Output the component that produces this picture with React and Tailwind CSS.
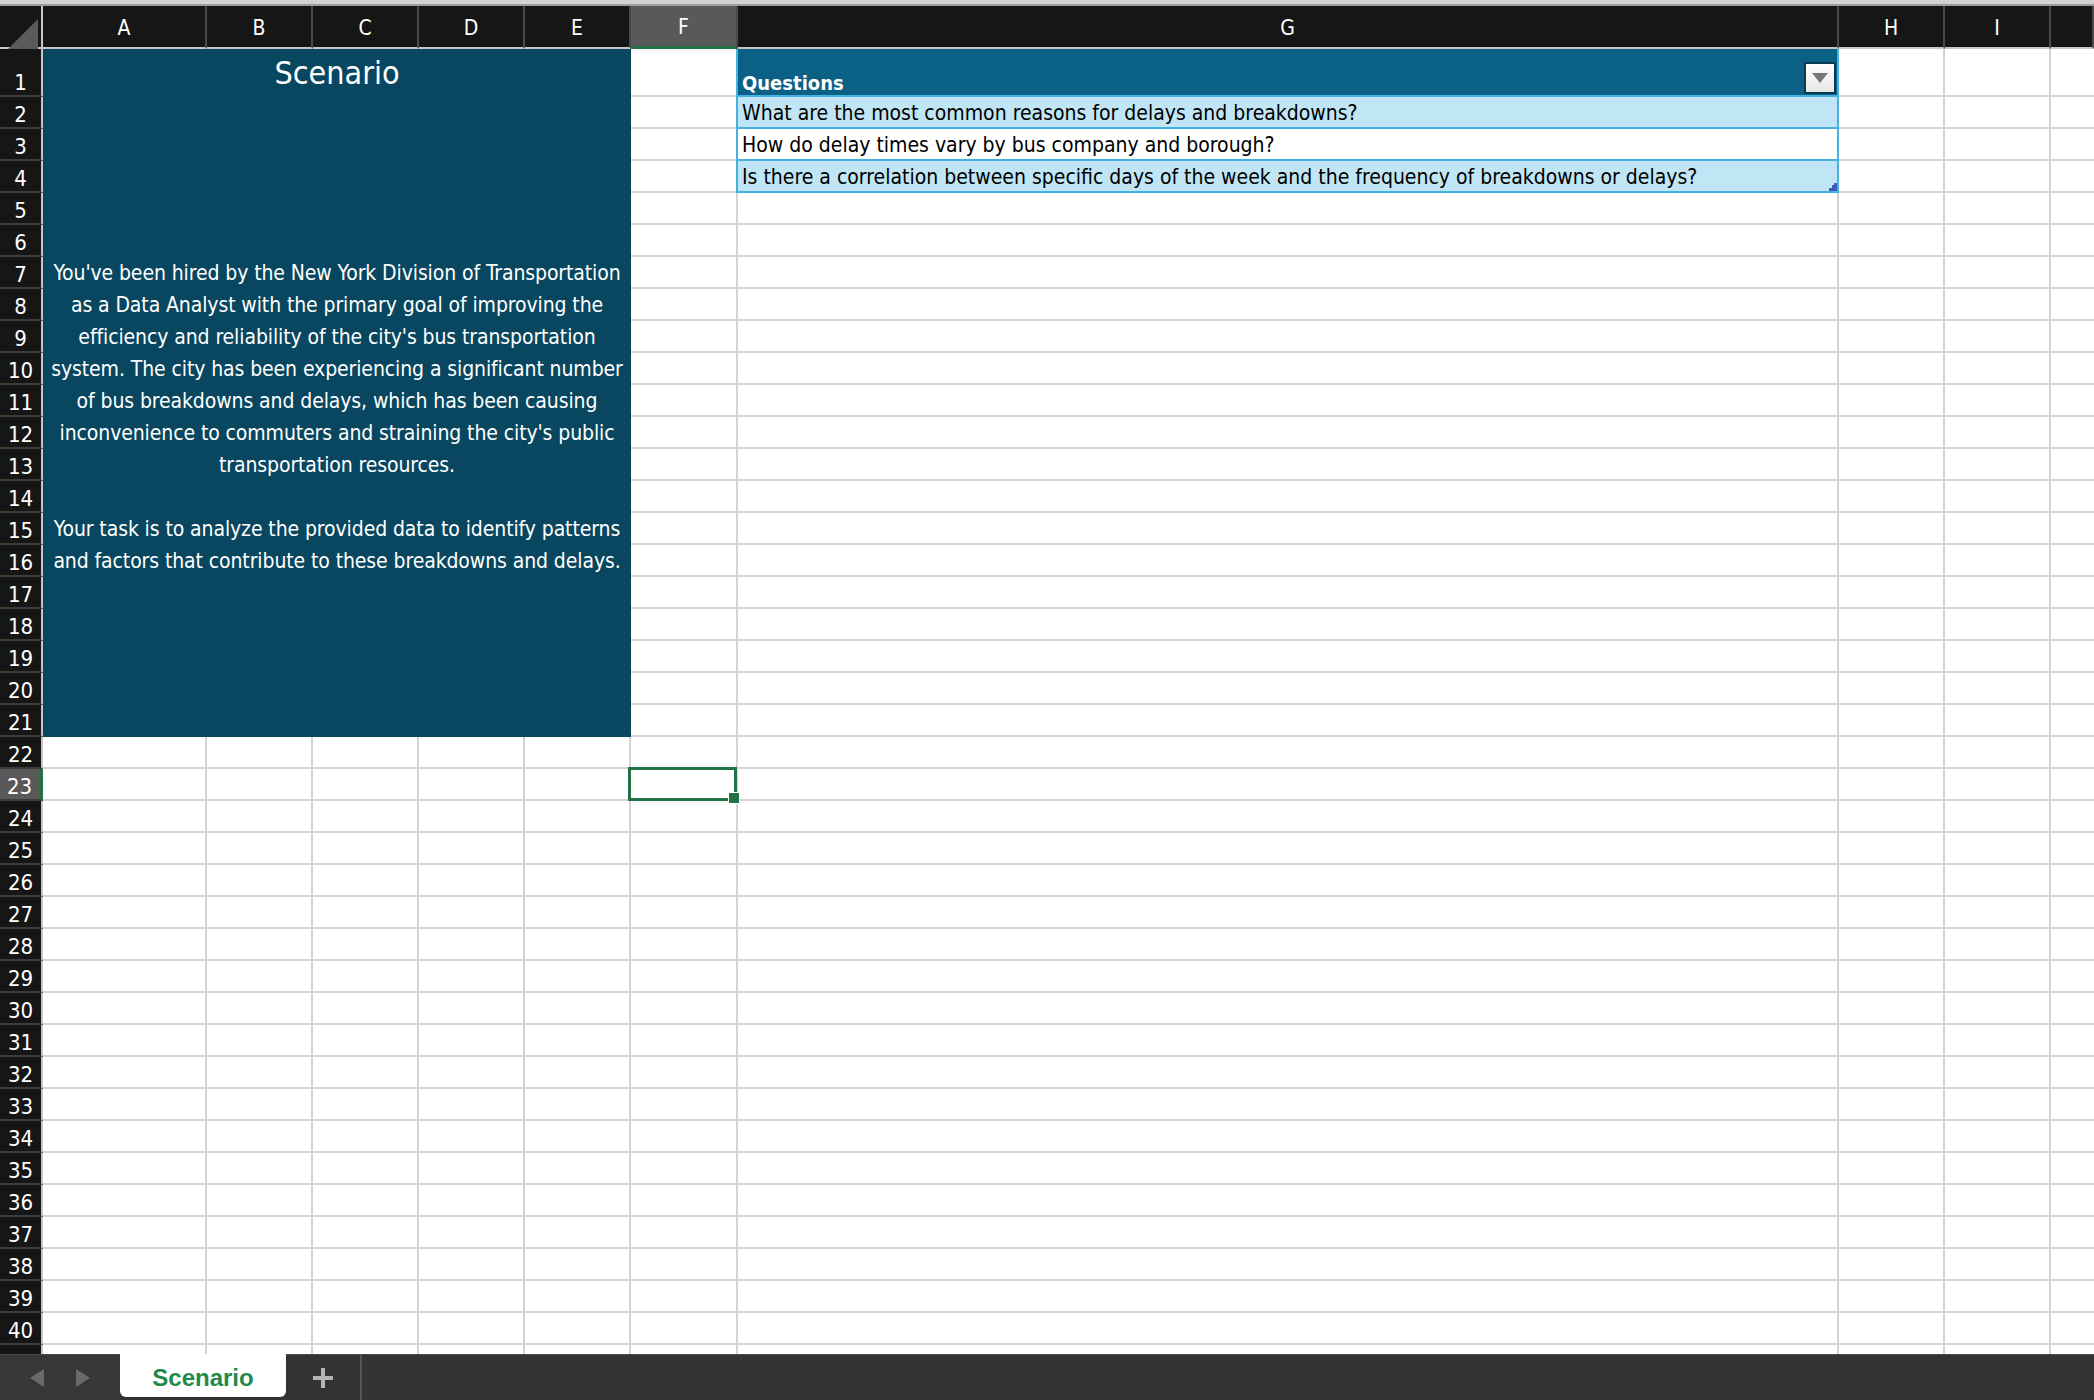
import React from 'react';

const narrow = "font-['Liberation_Sans_Narrow','DejaVu_Sans_Condensed',sans-serif]";

const columns = ['A', 'B', 'C', 'D', 'E', 'F', 'G', 'H', 'I', ''];

const scenarioLines = [
  "You've been hired by the New York Division of Transportation",
  'as a Data Analyst with the primary goal of improving the',
  "efficiency and reliability of the city's bus transportation",
  'system. The city has been experiencing a significant number',
  'of bus breakdowns and delays, which has been causing',
  "inconvenience to commuters and straining the city's public",
  'transportation resources.',
  '',
  'Your task is to analyze the provided data to identify patterns',
  'and factors that contribute to these breakdowns and delays.',
];

const questions = [
  'What are the most common reasons for delays and breakdowns?',
  'How do delay times vary by bus company and borough?',
  'Is there a correlation between specific days of the week and the frequency of breakdowns or delays?',
];

const SELECTED_ROW = 23;
const SELECTED_COL = 5;
const LAST_ROW = 41;

const ColumnHeader = ({ label, index }) => {
  const selected = index === SELECTED_COL;
  return (
    <div
      className={
        selected
          ? 'flex items-center justify-center pt-[4px] bg-[#595959] border-b-[3px] border-b-[#217346] border-r-2 border-r-[#4a4a4a] text-white text-[21px]'
          : 'flex items-center justify-center pt-[4px] bg-[#161616] border-b-2 border-b-[#c6c6c6] border-r-2 border-r-[#4a4a4a] text-white text-[21px]'
      }
    >
      {label}
    </div>
  );
};

const RowHeader = ({ row }) => {
  const selected = row === SELECTED_ROW;
  return (
    <div
      className={
        selected
          ? 'flex items-end justify-center bg-[#595959] border-r-4 border-r-[#217346] border-b-2 border-b-[#3c3c3c] text-white text-[22px]'
          : 'flex items-end justify-center bg-[#161616] border-r-2 border-r-[#c6c6c6] border-b-2 border-b-[#3c3c3c] text-white text-[22px]'
      }
    >
      {row < LAST_ROW && <span className="h-[30px] leading-[30px] pt-[3px]">{row}</span>}
    </div>
  );
};

const Cell = ({ row, col }) => {
  const last = col === columns.length - 1;
  const selected = row === SELECTED_ROW && col === SELECTED_COL;
  return (
    <div
      className={
        last
          ? 'bg-white border-b-2 border-[#d4d4d4]'
          : selected
            ? 'relative z-10 bg-white border-r-2 border-b-2 border-[#d4d4d4]'
            : 'bg-white border-r-2 border-b-2 border-[#d4d4d4]'
      }
    >
      {selected && (
        <>
          <div className="absolute -left-[3px] -top-[2px] -right-[1px] -bottom-[2px] border-[3px] border-[#217346]" />
          <div className="absolute -right-[4px] -bottom-[5px] w-[12px] h-[12px] bg-[#217346] border-[1px] border-white" />
        </>
      )}
    </div>
  );
};

const isCovered = (row, col) => (row <= 21 && col <= 4) || (row <= 4 && col === 6);

export default function App() {
  const body = [];
  for (let row = 1; row <= LAST_ROW; row++) {
    body.push(<RowHeader key={`r${row}`} row={row} />);
    columns.forEach((_, col) => {
      if (!isCovered(row, col)) body.push(<Cell key={`c${row}-${col}`} row={row} col={col} />);
    });
  }

  return (
    <div className={`w-[2094px] h-[1400px] flex flex-col overflow-hidden bg-white ${narrow}`}>
      <div className="h-[6px] shrink-0 bg-[#d2d2d2] border-b-2 border-[#9e9e9e]" />

      <div className="flex-1 overflow-hidden">
        <div className="grid grid-cols-[43px_164px_106px_106px_106px_106px_107px_1101px_106px_106px_43px] grid-rows-[43px_48px_repeat(40,32px)]">
          <div className="relative bg-[#161616] border-b-2 border-b-[#c6c6c6] border-r-2 border-r-[#c6c6c6]">
            <svg className="absolute left-[8px] top-[13px]" width="30" height="30" viewBox="0 0 30 30">
              <polygon points="30,0 30,30 0,30" fill="#5a5a5a" />
            </svg>
          </div>
          {columns.map((label, index) => (
            <ColumnHeader key={`h${index}`} label={label} index={index} />
          ))}

          {body}

          <div className="col-start-2 col-span-5 row-start-2 row-span-21 bg-[#08475f] text-white flex flex-col items-center">
            <div className="h-[48px] flex items-center text-[32px]">Scenario</div>
            <div className="h-[160px]" />
            {scenarioLines.map((line, i) => (
              <div key={i} className="h-[32px] leading-[32px] text-[21px] tracking-[-0.1px] whitespace-nowrap">
                {line}
              </div>
            ))}
          </div>

          <div className="col-start-8 row-start-2 row-span-4 relative z-20 -ml-[2px] flex flex-col border-l-2 border-r-2 border-[#44b3e1] text-[21px]">
            <div className="relative h-[48px] shrink-0 bg-[#0b6085] border-b-2 border-[#44b3e1] flex items-end">
              <span className="h-[32px] leading-[32px] pt-[4px] pl-[4px] text-white font-bold text-[20px]">Questions</span>
              <div className="absolute right-[1px] bottom-[1px] w-[32px] h-[32px] border-2 border-[#083b52] bg-gradient-to-b from-white to-[#e6e6e6] flex items-center justify-center">
                <svg width="16" height="10" viewBox="0 0 16 10">
                  <polygon points="0,0 16,0 8,10" fill="#777777" />
                </svg>
              </div>
            </div>
            {questions.map((q, i) => (
              <div
                key={i}
                className={
                  i % 2 === 0
                    ? 'relative h-[32px] shrink-0 bg-[#c0e6f5] border-b-2 border-[#44b3e1] flex items-center pt-[4px] pl-[4px] text-black whitespace-nowrap'
                    : 'relative h-[32px] shrink-0 bg-white border-b-2 border-[#44b3e1] flex items-center pt-[4px] pl-[4px] text-black whitespace-nowrap'
                }
              >
                {q}
                {i === questions.length - 1 && (
                  <svg className="absolute right-0 bottom-0" width="8" height="8" viewBox="0 0 8 8">
                    <polygon points="8,0 8,8 0,8 0,5 3,5 3,2 5,2 5,0" fill="#3e5ab8" />
                  </svg>
                )}
              </div>
            ))}
          </div>
        </div>
      </div>

      <div className="h-[46px] shrink-0 bg-[#333333] border-t-[1px] border-[#4a4a4a] flex items-stretch">
        <div className="w-[120px] flex items-center justify-center gap-[32px] bg-[#373737]">
          <svg width="14" height="18" viewBox="0 0 14 18">
            <polygon points="14,0 14,18 0,9" fill="#6a6a6a" />
          </svg>
          <svg width="14" height="18" viewBox="0 0 14 18">
            <polygon points="0,0 14,9 0,18" fill="#6a6a6a" />
          </svg>
        </div>
        <div className="w-[166px] -mt-[1px] mb-[3px] pt-[4px] bg-white rounded-b-[6px] flex items-center justify-center font-['Liberation_Sans',sans-serif] font-bold text-[24px] text-[#1f8a4c]">
          Scenario
        </div>
        <div className="w-[76px] flex items-center justify-center border-r-2 border-[#555555]">
          <svg width="20" height="20" viewBox="0 0 20 20">
            <rect x="8" y="0" width="4" height="20" fill="#b4b4b4" />
            <rect x="0" y="8" width="20" height="4" fill="#b4b4b4" />
          </svg>
        </div>
        <div className="flex-1" />
      </div>
    </div>
  );
}
